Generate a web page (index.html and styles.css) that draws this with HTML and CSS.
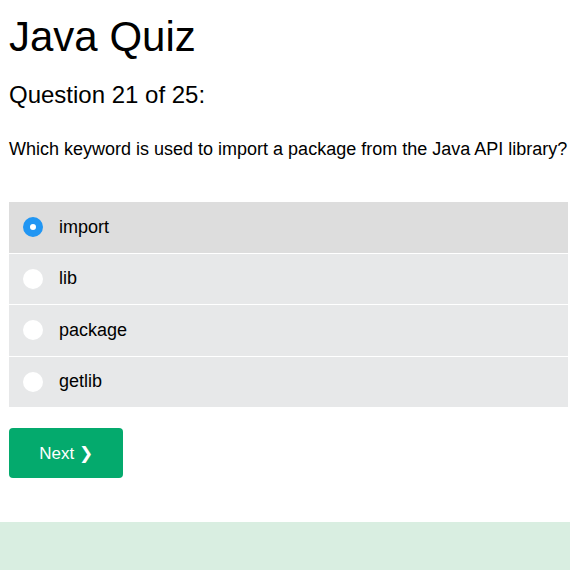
FILE: index.html
```html
<!DOCTYPE html>
<html>
<head>
<meta charset="utf-8">
<link rel="stylesheet" href="styles.css">
</head>
<body>
<div class="page">
  <h1 class="title">Java Quiz</h1>
  <h2 class="counter">Question 21 of 25:</h2>
  <p class="question">Which keyword is used to import a package from the Java API library?</p>
  <div class="options">
    <label class="option selected"><span class="radio"></span><span class="label">import</span></label>
    <label class="option"><span class="radio"></span><span class="label">lib</span></label>
    <label class="option"><span class="radio"></span><span class="label">package</span></label>
    <label class="option"><span class="radio"></span><span class="label">getlib</span></label>
  </div>
  <button class="next">Next &#10095;</button>
</div>
<div class="footer"></div>
</body>
</html>
```
FILE: styles.css
```css
html, body {
  margin: 0;
  padding: 0;
  background: #fff;
  font-family: "Liberation Sans", Arial, sans-serif;
  color: #000;
}
.page {
  padding: 0 2px 0 9px;
}
.title {
  margin: 0;
  padding-top: 12px;
  font-size: 42px;
  font-weight: normal;
  line-height: 50px;
}
.counter {
  margin: 18px 0 0 0;
  font-size: 24px;
  font-weight: normal;
  line-height: 30px;
}
.question {
  margin: 27px 0 0 0;
  font-size: 18px;
  line-height: 24px;
}
.options {
  margin-top: 41px;
  display: flex;
  flex-direction: column;
}
.option {
  display: flex;
  align-items: center;
  height: 50.5px;
  background: #e7e8e9;
  border-bottom: 1px solid #fff;
  font-size: 18px;
}
.option:last-child {
  border-bottom: none;
}
.option.selected {
  background: #dddddd;
}
.radio {
  width: 20px;
  height: 20px;
  border-radius: 50%;
  background: #fff;
  margin-left: 14px;
  box-sizing: border-box;
}
.option.selected .radio {
  background: #fff;
  border: 7px solid #2196f3;
}
.label {
  margin-left: 16px;
}
.next {
  display: block;
  margin-top: 21px;
  width: 114px;
  height: 50px;
  border: none;
  border-radius: 4px;
  background: #04aa6d;
  color: #fff;
  font-family: "Liberation Sans", Arial, sans-serif;
  font-size: 17px;
  padding: 0;
}
.footer {
  margin-top: 44px;
  height: 60px;
  background: #d9eee1;
}
```
